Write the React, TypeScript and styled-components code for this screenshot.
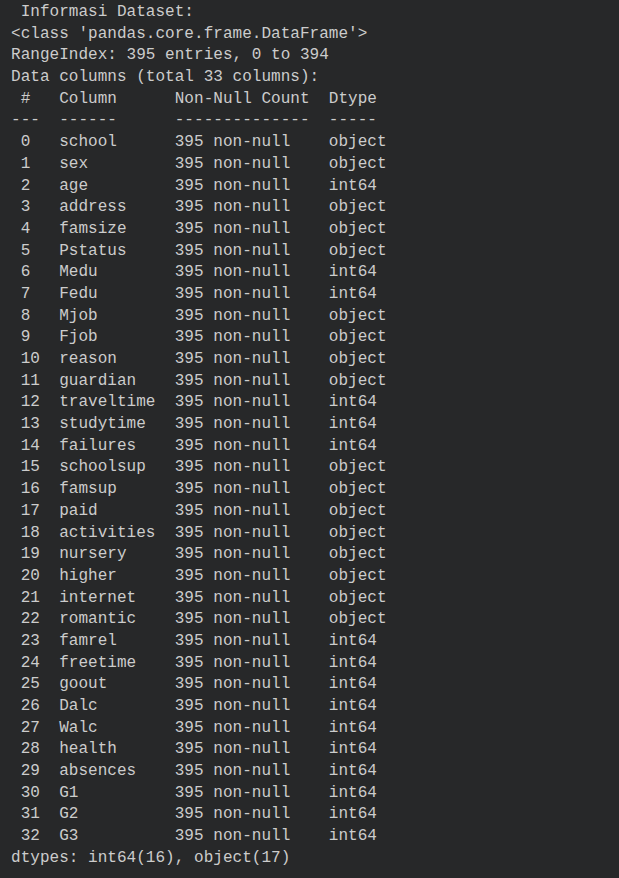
import React from "react";
import styled, { createGlobalStyle } from "styled-components";

const GlobalStyle = createGlobalStyle`
  html, body {
    margin: 0;
    padding: 0;
    background: #272829;
    min-height: 100%;
  }
  #root {
    min-height: 878px;
    background: #272829;
  }
`;

const Output = styled.pre`
  margin: 0;
  padding: 2px 0 0 11px;
  font-family: "Liberation Mono", "DejaVu Sans Mono", monospace;
  font-size: 16px;
  line-height: 21.7px;
  color: #cccccc;
  white-space: pre;
  letter-spacing: 0.03px;
`;

const Line = styled.div`
  height: 21.7px;
`;

const columns: [string, string][] = [
  ["school", "object"],
  ["sex", "object"],
  ["age", "int64"],
  ["address", "object"],
  ["famsize", "object"],
  ["Pstatus", "object"],
  ["Medu", "int64"],
  ["Fedu", "int64"],
  ["Mjob", "object"],
  ["Fjob", "object"],
  ["reason", "object"],
  ["guardian", "object"],
  ["traveltime", "int64"],
  ["studytime", "int64"],
  ["failures", "int64"],
  ["schoolsup", "object"],
  ["famsup", "object"],
  ["paid", "object"],
  ["activities", "object"],
  ["nursery", "object"],
  ["higher", "object"],
  ["internet", "object"],
  ["romantic", "object"],
  ["famrel", "int64"],
  ["freetime", "int64"],
  ["goout", "int64"],
  ["Dalc", "int64"],
  ["Walc", "int64"],
  ["health", "int64"],
  ["absences", "int64"],
  ["G1", "int64"],
  ["G2", "int64"],
  ["G3", "int64"],
];

const pad = (s: string, n: number) => s + " ".repeat(Math.max(0, n - s.length));

export default function App() {
  const lines: string[] = [
    " Informasi Dataset:",
    "<class 'pandas.core.frame.DataFrame'>",
    "RangeIndex: 395 entries, 0 to 394",
    "Data columns (total 33 columns):",
    " #   Column      Non-Null Count  Dtype ",
    "---  ------      --------------  ----- ",
    ...columns.map(
      ([name, dtype], i) =>
        " " + pad(String(i), 4) + pad(name, 12) + "395 non-null    " + dtype
    ),
    "dtypes: int64(16), object(17)",
  ];
  return (
    <>
      <GlobalStyle />
      <Output>
        {lines.map((l, i) => (
          <Line key={i}>{l}</Line>
        ))}
      </Output>
    </>
  );
}
